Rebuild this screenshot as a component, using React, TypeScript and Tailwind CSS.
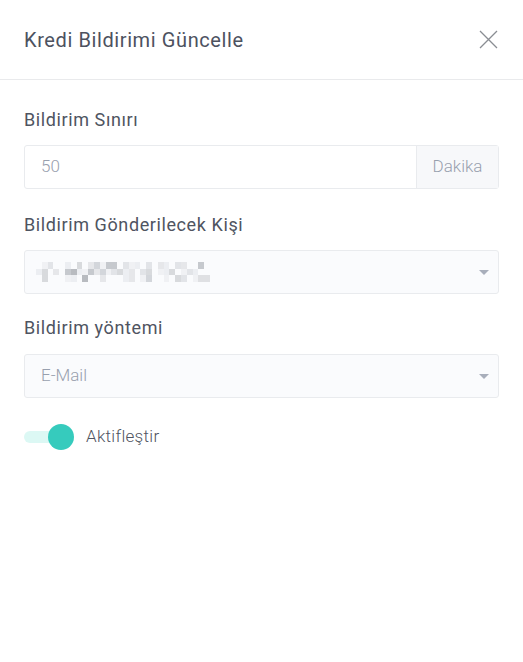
import React from "react";

const mosaic = [
  "0a20010c0b3a4402a1020b102b0040",
  "1c0b04d1a4b3a2c1b02c0a1c0a2100",
  "0c000a10d00b0001b0a300a0c20a66",
];

const shade: Record<string, string> = {
  "0": "transparent",
  "1": "#eceef2",
  "2": "#e2e4e8",
  "3": "#d3d6db",
  "4": "#c6c9ce",
  "6": "#dfe0e3",
  a: "#f0f1f4",
  b: "#e6e7ea",
  c: "#d8dadd",
  d: "#b8bbc0",
};

function Mosaic() {
  return (
    <div className="flex flex-col">
      {mosaic.map((row, i) => (
        <div key={i} className="flex">
          {row.split("").map((c, j) => (
            <div key={j} className="w-[5.8px] h-[6.5px]" style={{ background: shade[c] }} />
          ))}
        </div>
      ))}
    </div>
  );
}

function Caret() {
  return (
    <svg width="10" height="5" viewBox="0 0 10 5" className="shrink-0">
      <path d="M0 0 L10 0 L5 5 Z" fill="#a8aebb" />
    </svg>
  );
}

export default function App() {
  return (
    <div className="w-[523px] h-[662px] bg-white font-['Roboto',sans-serif]">
      <div className="h-[80px] border-b border-[#e9eaec] flex items-center justify-between pl-6 pr-[25px]">
        <h2 className="text-[20px] text-[#4d525f] tracking-[0.6px]">Kredi Bildirimi Güncelle</h2>
        <svg width="19" height="19" viewBox="0 0 19 19">
          <path d="M1 1 L18 18 M18 1 L1 18" stroke="#8a8d93" strokeWidth="1.3" />
        </svg>
      </div>
      <div className="px-6 pt-[29px]">
        <div className="text-[18px] text-[#4f5461] leading-[22px] tracking-[0.6px]">Bildirim Sınırı</div>
        <div className="mt-[14px] h-[44px] w-[475px] flex border border-[#e9ebee] rounded-[3px]">
          <div className="flex-1 flex items-center pl-4 text-[17px] font-light text-[#98a0ae]">50</div>
          <div className="w-[82px] border-l border-[#e9ebee] bg-[#f7f8fa] flex items-center justify-center text-[17px] font-light text-[#98a0ae]">Dakika</div>
        </div>

        <div className="mt-[25px] text-[18px] text-[#4f5461] leading-[22px] tracking-[0.6px]">Bildirim Gönderilecek Kişi</div>
        <div className="mt-[14px] h-[44px] w-[475px] flex items-center justify-between border border-[#e9ebee] rounded-[3px] bg-[#fafbfd] pl-[11px] pr-[9px]">
          <Mosaic />
          <Caret />
        </div>

        <div className="mt-[23px] text-[18px] text-[#4f5461] leading-[22px] tracking-[0.6px]">Bildirim yöntemi</div>
        <div className="mt-[15px] h-[44px] w-[475px] flex items-center justify-between border border-[#e9ebee] rounded-[3px] bg-[#fafbfd] pl-4 pr-[9px]">
          <span className="text-[17px] font-light text-[#98a0ae]">E-Mail</span>
          <Caret />
        </div>

        <div className="mt-[26px] flex items-center">
          <div className="relative w-[50px] h-[26px] flex items-center">
            <div className="w-[36px] h-[12px] rounded-full bg-[#dcf8f4]" />
            <div className="absolute left-[24px] top-0 w-[26px] h-[26px] rounded-full bg-[#36cbbd]" />
          </div>
          <span className="ml-[12px] text-[17px] font-light text-[#4f5461] tracking-[0.3px]">Aktifleştir</span>
        </div>
      </div>
    </div>
  );
}
